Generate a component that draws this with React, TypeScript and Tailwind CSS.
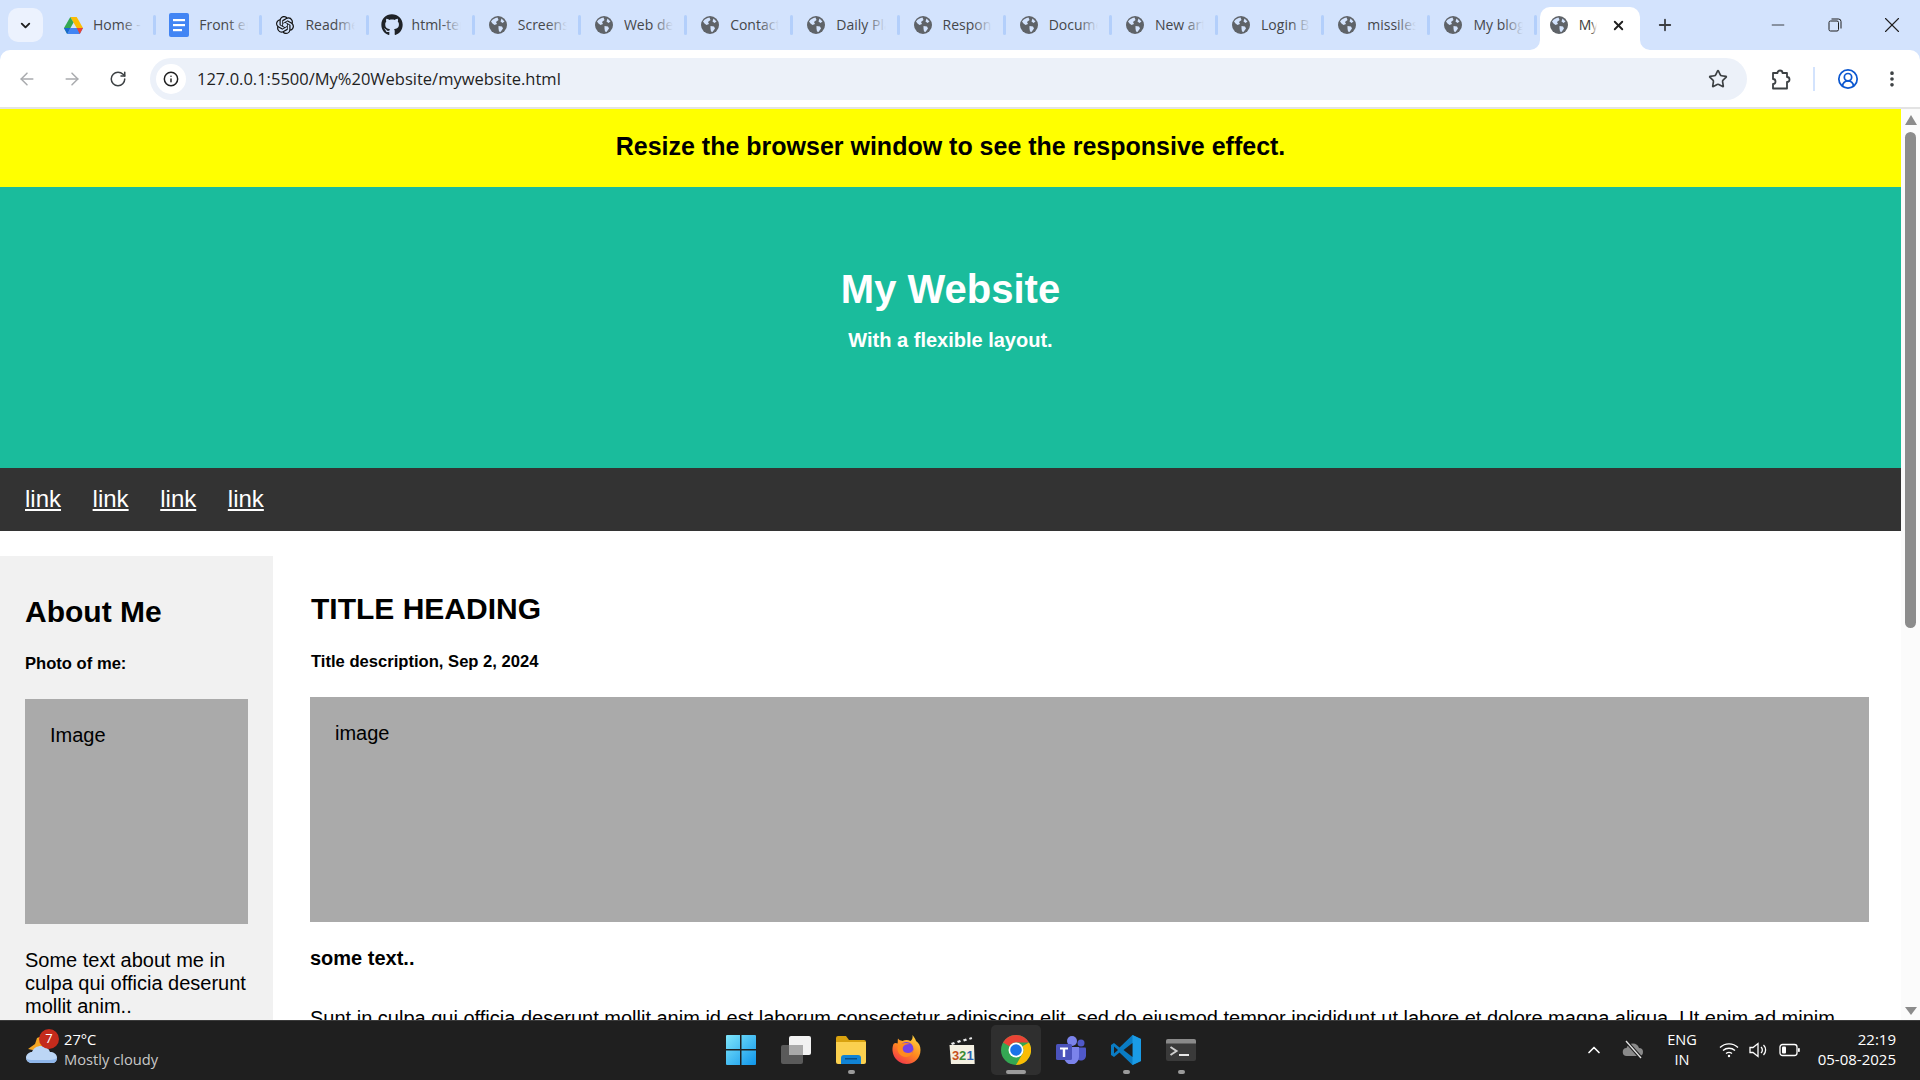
import React from "react";
import { FaGithub } from "react-icons/fa";
import { SiOpenai } from "react-icons/si";
import { ArrowLeft, ArrowRight, RotateCw, Info, Star, CircleUserRound, EllipsisVertical, ChevronDown, ChevronUp, X, Plus, Minus } from "lucide-react";

function Globe() {
  return (
    <svg width="18" height="18" viewBox="0 0 18 18" className="shrink-0">
      <circle cx="9" cy="9" r="9" fill="#5f6368" />
      <path d="M2 5.500C4 3 6 1.800 8.500 1.500L9.500 4 7 6 8 8 5.500 9 3.500 7.500ZM9.500 10l3.500.5 1 2-2.500 3.600-1.500-.6-.5-3ZM12.500 2.500l3 3-2 1.500-2-1.500Z" fill="#d3e3fd" />
    </svg>
  );
}

function Drive() {
  return (
    <svg width="19" height="17" viewBox="0 0 19 17" className="shrink-0">
      <path d="M6.300 0h6.400l6.300 11h-6.300Z" fill="#fbbc04" />
      <path d="M6.300 0 0 11l3.200 6L9.500 5.500Z" fill="#34a853" />
      <path d="M3.200 17h12.600L19 11H6.300Z" fill="#4285f4" />
      <path d="M15.800 17 19 11h-6.300Z" fill="#ea4335" />
      <path d="M3.200 17 6.300 11H0Z" fill="#1967d2" />
    </svg>
  );
}

function Docs() {
  return (
    <svg width="20" height="24" viewBox="0 0 20 24" className="shrink-0">
      <rect width="20" height="24" rx="2" fill="#4285f4" />
      <rect x="4" y="6" width="12" height="2.200" fill="#fff" />
      <rect x="4" y="11" width="12" height="2.200" fill="#fff" />
      <rect x="4" y="16" width="9" height="2.200" fill="#fff" />
    </svg>
  );
}

const tabs: [string, React.ReactNode][] = [
  ["Home - Google Drive", <Drive />],
  ["Front end notes", <Docs />],
  ["Readme generator", <SiOpenai size={18} className="shrink-0 text-[#111]" />],
  ["html-template", <FaGithub size={22} className="shrink-0 text-[#1f2328]" />],
  ["Screenshot", <Globe />],
  ["Web design", <Globe />],
  ["Contact", <Globe />],
  ["Daily Planner", <Globe />],
  ["Responsive", <Globe />],
  ["Document", <Globe />],
  ["New article", <Globe />],
  ["Login Bar", <Globe />],
  ["missiles", <Globe />],
  ["My blog", <Globe />],
];

function Tab({ title, icon }: { title: string; icon: React.ReactNode }) {
  return (
    <div className="relative flex h-[44px] w-[106.2px] shrink-0 items-center pl-[10px] pr-[14px]">
      <div className="flex w-[26px] shrink-0 justify-center">{icon}</div>
      <div className="relative ml-[7px] min-w-0 flex-1 overflow-hidden whitespace-nowrap text-[14px] leading-[20px] text-[#45474a]">
        {title}
        <div className="absolute inset-y-0 right-0 w-[20px] bg-gradient-to-r from-transparent to-[#d3e3fd]" />
      </div>
      <div className="absolute right-0 top-[12px] h-[20px] w-[3px] rounded-full bg-[#b3cffb]" />
    </div>
  );
}

function Flare({ side }: { side: "l" | "r" }) {
  return (
    <svg width="10" height="10" viewBox="0 0 10 10" className={side === "l" ? "absolute bottom-0 left-[-10px]" : "absolute bottom-0 right-[-10px]"}>
      <path d={side === "l" ? "M10 0v10H0a10 10 0 0 0 10-10Z" : "M0 0v10h10A10 10 0 0 1 0 0Z"} fill="#fff" />
    </svg>
  );
}

function TabStrip() {
  return (
    <div className="flex h-[50px] shrink-0 items-start bg-[#d3e3fd] pl-[8px] font-['Open_Sans',sans-serif]">
      <div className="mr-[7px] mt-[8px] flex h-[34px] w-[35px] shrink-0 items-center justify-center rounded-[10px] bg-[#ecf2fe]">
        <ChevronDown size={15} strokeWidth={3} className="text-[#1f1f1f]" />
      </div>
      <div className="mt-[3px] flex h-[44px] items-center">
        {tabs.map(([t, i]) => (
          <Tab key={t} title={t} icon={i} />
        ))}
      </div>
      <div className="relative ml-[3px] mt-[7px] flex h-[43px] w-[100px] shrink-0 items-center rounded-t-[10px] bg-white pb-[7px] pl-[10px] pr-[8px]">
        <Flare side="l" />
        <Flare side="r" />
        <Globe />
        <div className="relative ml-[11px] w-[18px] overflow-hidden whitespace-nowrap text-[14px] leading-[20px] text-[#3c3c3c]">
          My website
          <div className="absolute inset-y-0 right-0 w-[6px] bg-gradient-to-r from-transparent to-white" />
        </div>
        <X size={15} strokeWidth={3} className="ml-[14px] text-[#1f1f1f]" />
      </div>
      <div className="mt-[3px] flex h-[44px] w-[50px] shrink-0 items-center justify-center">
        <Plus size={18} strokeWidth={2.400} className="text-[#3c3f43]" />
      </div>
      <div className="ml-auto flex h-[50px] items-center">
        <div className="flex w-[56px] justify-center pr-[3px]"><Minus size={20} strokeWidth={1} className="text-[#1f1f1f]" /></div>
        <div className="flex w-[56px] justify-center pr-[1px]">
          <svg width="14" height="14" viewBox="0 0 14 14" fill="none" stroke="#1f1f1f" strokeWidth="1">
            <rect x="1" y="3" width="9.500" height="10" rx="1.500" />
            <path d="M3.500 1h7A2.500 2.500 0 0 1 13 3.500v7" />
          </svg>
        </div>
        <div className="flex w-[57px] justify-center"><X size={26} strokeWidth={1} className="text-[#1f1f1f]" /></div>
      </div>
    </div>
  );
}

function Toolbar() {
  return (
    <div className="flex h-[57px] shrink-0 items-center rounded-t-[10px] bg-white pt-[1px] font-['Open_Sans',sans-serif]">
      <div className="flex w-[150px] shrink-0 items-center pb-[1px] pl-[17px]">
        <ArrowLeft size={20} strokeWidth={1.800} className="text-[#a9abae]" />
        <ArrowRight size={20} strokeWidth={1.800} className="ml-[25px] text-[#a9abae]" />
        <RotateCw size={18} strokeWidth={2} className="ml-[27px] text-[#3c4043]" />
      </div>
      <div className="flex h-[42px] w-[1597px] shrink-0 items-center rounded-full bg-[#ecf1f9] pl-[6px] pr-[19px]">
        <div className="flex h-[30px] w-[30px] items-center justify-center rounded-full bg-white">
          <Info size={16} strokeWidth={2.200} className="text-[#1f1f1f]" />
        </div>
        <span className="ml-[11px] text-[16.500px] leading-[20px] text-[#1f1f1f]">127.0.0.1:5500/My%20Website/mywebsite.html</span>
        <Star size={20} strokeWidth={2} className="ml-auto text-[#3c4043]" />
      </div>
      <div className="flex flex-1 items-center">
        <svg width="23" height="23" viewBox="0 0 23 23" fill="none" stroke="#3c4043" strokeWidth="1.800" strokeLinejoin="round" className="ml-[22px] shrink-0">
          <path d="M4 5h4.500a2.500 2.500 0 0 1 5 0H18v4a2.500 2.500 0 0 1 0 5v6.500H4V16a2.500 2.500 0 0 0 0-5Z" />
        </svg>
        <div className="ml-[21px] h-[24px] w-[2px] bg-[#d3e3fd]" />
        <CircleUserRound size={22} strokeWidth={1.900} className="ml-[22px] text-[#0b57d0]" />
        <EllipsisVertical size={20} strokeWidth={2.400} className="ml-[23px] text-[#3c4043]" />
      </div>
    </div>
  );
}

function Scrollbar() {
  return (
    <div className="flex w-[19px] shrink-0 flex-col items-center bg-[#fbfbfb]">
      <div className="mt-[6px] h-0 w-0 border-x-[6px] border-b-[10px] border-x-transparent border-b-[#8c8c8c]" />
      <div className="mt-[7px] h-[496px] w-[11px] rounded-full bg-[#8c8c8c]" />
      <div className="mb-[5px] mt-auto h-0 w-0 border-x-[6px] border-t-[8px] border-x-transparent border-t-[#8c8c8c]" />
    </div>
  );
}

function Page() {
  return (
    <div className="min-w-0 flex-1 overflow-hidden bg-white font-['Liberation_Sans',Arial,sans-serif] text-[20px] leading-[23px] text-black">
      <div className="flex h-[78px] items-center justify-center bg-[#ffff00] pb-[4px] text-[25px] font-bold leading-[30px]">
        Resize the browser window to see the responsive effect.
      </div>
      <div className="flex h-[281px] flex-col items-center bg-[#1abc9c] pt-[79px] text-white">
        <div className="text-[40px] font-bold leading-[46px]">My Website</div>
        <div className="mt-[17px] font-bold">With a flexible layout.</div>
      </div>
      <div className="flex h-[63px] items-center gap-[31.600px] bg-[#333333] px-[25px] pb-[2px] text-[24px] leading-[28px] text-white">
        <span className="underline">link</span>
        <span className="underline">link</span>
        <span className="underline">link</span>
        <span className="underline">link</span>
      </div>
      <div className="mt-[25px] flex items-start">
        <div className="h-[600px] w-[273px] shrink-0 bg-[#f1f1f1] px-[25px] pt-[38px]">
          <div className="text-[30px] font-bold leading-[35px]">About Me</div>
          <div className="mt-[25px] text-[16.600px] font-bold leading-[19px]">Photo of me:</div>
          <div className="mt-[26px] h-[225px] bg-[#aaaaaa] px-[25px] pt-[25px]">Image</div>
          <p className="mt-[25px]">Some text about me in culpa qui officia deserunt mollit anim..</p>
        </div>
        <div className="min-w-0 flex-1 pl-[37px] pr-[32px] pt-[35px]">
          <div className="ml-[1px] text-[30px] font-bold leading-[35px]">TITLE HEADING</div>
          <div className="ml-[1px] mt-[26px] text-[16.600px] font-bold leading-[19px]">Title description, Sep 2, 2024</div>
          <div className="mt-[26px] h-[225px] bg-[#aaaaaa] px-[25px] pt-[25px]">image</div>
          <div className="mt-[25px] font-bold">some text..</div>
          <p className="mt-[37px] whitespace-nowrap">Sunt in culpa qui officia deserunt mollit anim id est laborum consectetur adipiscing elit, sed do eiusmod tempor incididunt ut labore et dolore magna aliqua. Ut enim ad minim</p>
        </div>
      </div>
    </div>
  );
}

function Weather() {
  return (
    <div className="relative h-[36px] w-[40px] shrink-0">
      <svg width="40" height="36" viewBox="0 0 40 36" className="absolute left-0 top-0">
        <path d="M4 17 L11 12 L13 6 L18 4 L18 20Z" fill="#f5a623" />
        <path d="M8 31c-4 0-6-2.500-6-5.500S5 20 8 20c1.500-4 5-6 9-6 5 0 8 3 9 6 3.500 0 7 2 7 5.500S31 31 28 31Z" fill="#bcd6f5" />
        <path d="M2 26c1 3 3 5 6 5h20c3 0 5-2 5-5-3 2-6 2-10 2H10c-4 0-6 0-8-2Z" fill="#8fb6ea" />
      </svg>
      <div className="absolute left-[15px] top-[-3px] flex h-[20px] w-[20px] items-center justify-center rounded-full bg-[#c42b1c] text-[13px] leading-none text-white">7</div>
    </div>
  );
}

const ico = "shrink-0";

function WinLogo() {
  return (
    <svg width="30" height="30" viewBox="0 0 30 30" className={ico}>
      <defs>
        <linearGradient id="w" x1="0" y1="0" x2="1" y2="1">
          <stop offset="0" stopColor="#7fe6fb" />
          <stop offset="1" stopColor="#0f95ea" />
        </linearGradient>
      </defs>
      <path d="M0 1a1 1 0 0 1 1-1h13v14H0ZM15.500 0H29a1 1 0 0 1 1 1v13H15.500ZM0 15.500h14V30H1a1 1 0 0 1-1-1ZM15.500 15.500H30V29a1 1 0 0 1-1 1H15.500Z" fill="url(#w)" />
    </svg>
  );
}

function TaskView() {
  return (
    <svg width="30" height="28" viewBox="0 0 30 28" className={ico}>
      <rect x="0" y="9" width="22" height="19" rx="2" fill="#5a5a5a" />
      <rect x="8" y="0" width="22" height="19" rx="2" fill="#f2f2f2" />
      <rect x="8" y="9" width="14" height="10" fill="#a9a9a9" />
    </svg>
  );
}

function Folder() {
  return (
    <svg width="30" height="28" viewBox="0 0 30 28" className={ico}>
      <path d="M0 2a2 2 0 0 1 2-2h8l3 4h15a2 2 0 0 1 2 2v4H0Z" fill="#d9a20f" />
      <path d="M0 6h30v20a2 2 0 0 1-2 2H2a2 2 0 0 1-2-2Z" fill="#fbd04f" />
      <path d="M5 22a3 3 0 0 1 3-3h14a3 3 0 0 1 3 3v6H5Z" fill="#1183d4" />
      <rect x="9" y="22" width="12" height="1.500" fill="#0a4f86" />
    </svg>
  );
}

function Firefox() {
  return (
    <svg width="29" height="29" viewBox="0 0 29 29" className={ico}>
      <defs>
        <linearGradient id="ff" x1="0.8" y1="0" x2="0.2" y2="1">
          <stop offset="0" stopColor="#ffd53f" />
          <stop offset="0.5" stopColor="#ff8a1f" />
          <stop offset="1" stopColor="#f0304e" />
        </linearGradient>
      </defs>
      <path d="M24 6c-.5-2-2-4-3.500-6 .5 3-.5 5-2 6-3-1.500-6-1-8 0C8.500 5.500 7 5 6 3.500 5.500 5 6 7 5.500 8.500 4 7.500 2.500 8 1.500 9 0 13 0 17 2.500 22c2.500 4 7 7 12 7 8 0 14-6 14-14 0-4-1.500-7-4.500-9Z" fill="url(#ff)" />
      <circle cx="14.500" cy="14" r="7" fill="#7542e5" />
      <path d="M6 11c3-3 8-4 12-2-4 0-6 1-7 3-1 3 1 6 5 6 3 0 4-1 5-3 0 4-3 7-7 7-6 0-10-6-8-11Z" fill="#ff8a1f" />
    </svg>
  );
}

function MediaPlayer() {
  return (
    <svg width="28" height="30" viewBox="0 0 28 30" className={ico}>
      <path d="M1 7 25 0l1.500 4.500L2.500 11Z" fill="#222" />
      <path d="M4 8l3-1 1 2-3 1ZM10 6l3-1 1 2-3 1ZM16 4.500l3-1 1 2-3 1ZM22 3l2.500-1 .7 2-2.500.7Z" fill="#eee" />
      <path d="M2.500 10H27l.7 19H4Z" fill="#f4f0e2" />
      <text x="5" y="25" fontFamily="'Liberation Sans',sans-serif" fontSize="13" fontWeight="700" fill="#c8501e">3</text>
      <text x="12" y="25" fontFamily="'Liberation Sans',sans-serif" fontSize="13" fontWeight="700" fill="#3a8a35">2</text>
      <text x="19.500" y="25" fontFamily="'Liberation Sans',sans-serif" fontSize="13" fontWeight="700" fill="#2c62b5">1</text>
    </svg>
  );
}

function Chrome() {
  return (
    <svg width="30" height="30" viewBox="0 0 30 30" className={ico}>
      <circle cx="15" cy="15" r="15" fill="#34a853" />
      <path d="M15 0a15 15 0 0 1 13 7.500H15a7.500 7.500 0 0 0-6.500 3.750L2 7.500A15 15 0 0 1 15 0Z" fill="#ea4335" />
      <path d="M28 7.500A15 15 0 0 1 15 30l6.500-11.250A7.500 7.500 0 0 0 21.500 11.250Z" fill="#fbbc04" />
      <circle cx="15" cy="15" r="7.500" fill="#fff" />
      <circle cx="15" cy="15" r="5.800" fill="#1a73e8" />
    </svg>
  );
}

function Teams() {
  return (
    <svg width="30" height="28" viewBox="0 0 30 28" className={ico}>
      <circle cx="16" cy="5" r="5" fill="#7b83eb" />
      <circle cx="25" cy="7" r="3.500" fill="#5059c9" />
      <path d="M20 11.500h9a1 1 0 0 1 1 1v7c0 3-2.500 5-5 5s-5-2-5-5Z" fill="#5059c9" />
      <path d="M8 11h15v10a7.500 7.500 0 0 1-15 0Z" fill="#7b83eb" />
      <rect x="0" y="8" width="16" height="16" rx="1.500" fill="#4b53bc" />
      <path d="M4 11.500h8v2H9.200v7.500H6.800v-7.500H4Z" fill="#fff" />
    </svg>
  );
}

function VSCode() {
  return (
    <svg width="30" height="30" viewBox="0 0 30 30" className={ico}>
      <path d="M21.500 0 30 4v22l-8.500 4-13-12.500L3 22 0 20V10l3-2 5.500 4.500Z" fill="#0a7cc4" />
      <path d="M21.500 0 30 4v22l-8.500 4Z" fill="#1a9be6" />
      <path d="M21.500 8 12.500 15l9 7Z" fill="#1f1f1f" />
      <path d="M3 11.500 7 15l-4 3.500Z" fill="#1f1f1f" />
    </svg>
  );
}

function Term() {
  return (
    <svg width="30" height="22" viewBox="0 0 30 22" className={ico}>
      <rect width="30" height="22" rx="2" fill="#3a3a3a" />
      <path d="M0 2a2 2 0 0 1 2-2h26a2 2 0 0 1 2 2v2.500H0Z" fill="#8a8a8a" />
      <path d="m4.500 8 6 4-6 4" fill="none" stroke="#cfcfcf" strokeWidth="2" />
      <rect x="13" y="15" width="10" height="2" fill="#e6e6e6" />
    </svg>
  );
}

function Pin({ children, dot, active }: { children: React.ReactNode; dot?: "s" | "l"; active?: boolean }) {
  return (
    <div className={active ? "relative flex h-[50px] w-[50px] items-center justify-center rounded-[5px] bg-[#2f2f2f]" : "relative flex h-[50px] w-[50px] items-center justify-center"}>
      {children}
      {dot === "s" && <div className="absolute bottom-[1px] h-[4px] w-[7px] rounded-full bg-[#9b9b9b]" />}
      {dot === "l" && <div className="absolute bottom-[1px] h-[4px] w-[20px] rounded-full bg-[#9b9b9b]" />}
    </div>
  );
}

function Taskbar() {
  return (
    <div className="flex h-[60px] shrink-0 items-center border-t border-[#3b3b3b] bg-[#1f1f1f] pb-[2px] font-['Open_Sans',sans-serif] text-white">
      <div className="flex w-[716px] shrink-0 items-center pl-[24px]">
        <Weather />
        <div className="mb-[2px] text-[14.700px] leading-[20px]">
          <div>27°C</div>
          <div className="text-[#c8c8c8]">Mostly cloudy</div>
        </div>
      </div>
      <div className="flex items-center gap-[5px]">
        <Pin><WinLogo /></Pin>
        <Pin><TaskView /></Pin>
        <Pin dot="s"><Folder /></Pin>
        <Pin><Firefox /></Pin>
        <Pin><MediaPlayer /></Pin>
        <Pin dot="l" active><Chrome /></Pin>
        <Pin><Teams /></Pin>
        <Pin dot="s"><VSCode /></Pin>
        <Pin dot="s"><Term /></Pin>
      </div>
      <div className="ml-auto flex items-center pr-[24px]">
        <ChevronUp size={20} strokeWidth={2} className="text-white" />
        <svg width="22" height="20" viewBox="0 0 22 20" className="ml-[18px]">
          <path d="M5 16a4 4 0 0 1-.5-8C5.500 5 8 3.500 11 3.500S16 5 17 8a4 4 0 0 1 0 8Z" fill="#8a8a8a" />
          <path d="M4 1l15 17" stroke="#1f1f1f" strokeWidth="3.500" />
          <path d="M4 1l15 17" stroke="#e5e5e5" strokeWidth="1.300" />
        </svg>
        <div className="ml-[16px] w-[44px] text-center text-[14.500px] leading-[20px]">
          <div>ENG</div>
          <div>IN</div>
        </div>
        <svg width="20" height="16" viewBox="0 0 20 16" fill="none" stroke="#fff" strokeWidth="1.400" className="ml-[15px]">
          <path d="M1 5.500a13 13 0 0 1 18 0M4 8.500a9 9 0 0 1 12 0M7 11.500a5 5 0 0 1 6 0" />
          <circle cx="10" cy="14" r="1.200" fill="#fff" stroke="none" />
        </svg>
        <svg width="20" height="18" viewBox="0 0 20 18" fill="none" stroke="#fff" strokeWidth="1.300" className="ml-[10px]">
          <path d="M1 6.500h3L9 2.500v13L4 11.500H1Z" />
          <path d="M12 6a4 4 0 0 1 0 6M14.500 4a7 7 0 0 1 0 10" />
        </svg>
        <svg width="21" height="14" viewBox="0 0 21 14" className="ml-[10px]">
          <rect x="1" y="1.500" width="17" height="11" rx="2.500" fill="none" stroke="#fff" strokeWidth="1.300" />
          <rect x="3" y="3.500" width="4" height="7" rx="1" fill="#fff" />
          <rect x="19" y="5" width="1.800" height="4" rx="0.800" fill="#fff" />
        </svg>
        <div className="mb-[2px] ml-[14px] w-[82px] text-right text-[15px] leading-[20px]">
          <div>22:19</div>
          <div className="whitespace-nowrap">05-08-2025</div>
        </div>
      </div>
    </div>
  );
}

export default function App() {
  return (
    <div className="flex h-screen w-full flex-col overflow-hidden bg-[#d3e3fd]">
      <TabStrip />
      <Toolbar />
      <div className="h-[2px] shrink-0 bg-[#e3e3e3]" />
      <div className="flex min-h-0 flex-1">
        <Page />
        <Scrollbar />
      </div>
      <Taskbar />
    </div>
  );
}
